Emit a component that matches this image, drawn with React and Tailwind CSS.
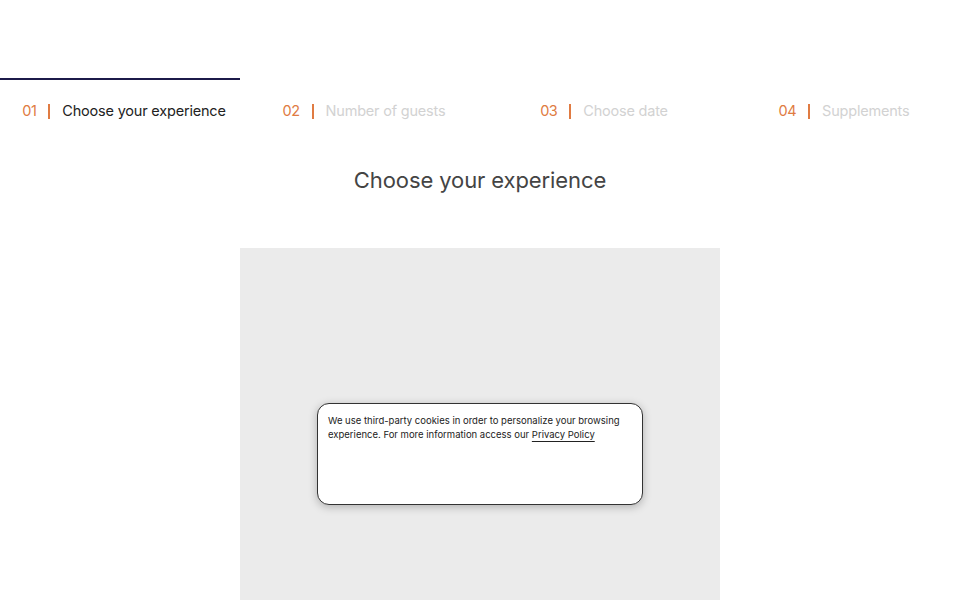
export default function App() {
  const steps = [
    { n: "01", label: "Choose your experience", active: true },
    { n: "02", label: "Number of guests" },
    { n: "03", label: "Choose date" },
    { n: "04", label: "Supplements" },
  ];
  return (
    <div className="w-[960px] h-[600px] overflow-hidden bg-white" style={{ fontFamily: "Inter, 'Noto Sans', sans-serif" }}>
      <div className="h-[78px]" />
      <div className="grid grid-cols-4">
        {steps.map((s) => (
          <div key={s.n} className={`h-[64px] border-t-2 flex items-center justify-center pl-[8px] ${s.active ? "border-[#1c1a4a]" : "border-transparent"}`}>
            <div className="flex items-center text-[14.5px] tracking-[-0.2px]">
              <span className="text-[#e07b42] tracking-[-0.5px]">{s.n}</span>
              <span className="mx-[12px] w-[2px] h-[15px] bg-[#e07b42]" />
              <span className={s.active ? "text-[#222222]" : "text-[#d2d2d2]"}>{s.label}</span>
            </div>
          </div>
        ))}
      </div>
      <h1 className="text-center text-[22px] text-[#444444] tracking-[-0.1px] mt-[23px] leading-[30px]">Choose your experience</h1>
      <div className="flex justify-center mt-[53px]">
        <div className="w-[480px] h-[400px] bg-[#ebebeb] flex justify-center pt-[155px] shrink-0">
          <div className="w-[326px] h-[102px] bg-white border border-[#333333] rounded-[12px] shadow-[0_2px_8px_rgba(0,0,0,0.25)] px-[10px] pt-[10px] text-[9.5px] leading-[14px] text-[#222222]">
            We use third-party cookies in order to personalize your browsing experience. For more information access our{" "}
            <span className="underline underline-offset-[3px] decoration-[#222222]">Privacy Policy</span>
          </div>
        </div>
      </div>
    </div>
  );
}
